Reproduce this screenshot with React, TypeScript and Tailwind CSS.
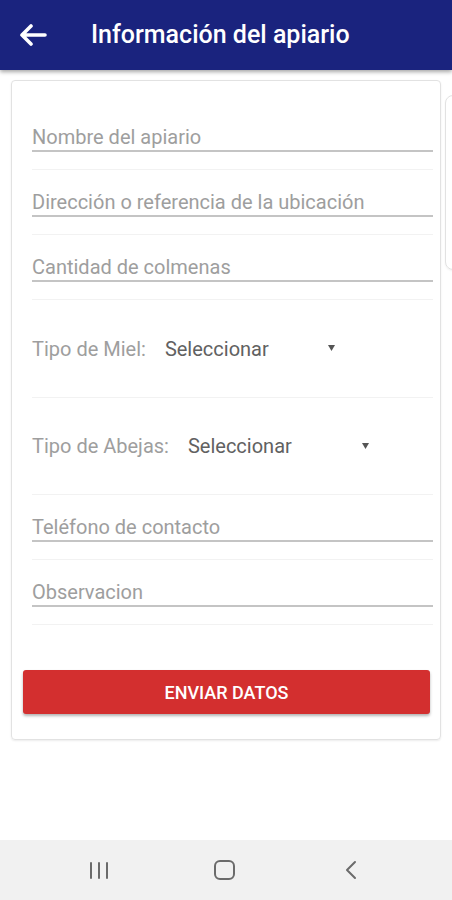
import React from "react";

const textFields = ["Nombre del apiario", "Dirección o referencia de la ubicación", "Cantidad de colmenas"];
const lowerFields = ["Teléfono de contacto", "Observacion"];

function TextRow({ placeholder }: { placeholder: string }) {
  return (
    <div className="h-[65px] border-b border-[#f2f2f2] ml-[20px] mr-[7px] pt-[19px]">
      <div className="h-[28px] border-b-2 border-[#c4c4c4] text-[20px] leading-[26px] text-[#9e9e9e] whitespace-nowrap">
        {placeholder}
      </div>
    </div>
  );
}

function SpinnerRow({ label, width, height }: { label: string; width: string; height: string }) {
  return (
    <div className={`${height} border-b border-[#f2f2f2] ml-[20px] mr-[7px] flex items-center`}>
      <span className="text-[20px] leading-[24px] text-[#9e9e9e]">{label}</span>
      <div className={`${width} ml-[19px] flex items-center justify-between`}>
        <span className="text-[20px] leading-[24px] text-[#616161]">Seleccionar</span>
        <svg width="7" height="6" viewBox="0 0 7 6" className="mb-[1px]">
          <polygon points="0,0 7,0 3.5,6" fill="#555" />
        </svg>
      </div>
    </div>
  );
}

export default function App() {
  return (
    <div className="w-[452px] h-[900px] flex flex-col bg-white overflow-hidden font-['Roboto',sans-serif]">
      {/* HEADER */}
      <header className="h-[70px] shrink-0 bg-[#1a237e] flex items-center shadow-[0_2px_4px_rgba(0,0,0,0.35)] relative z-10">
        <svg width="28" height="22" viewBox="0 0 28 22" className="ml-[19px]">
          <path d="M26 11H3M12 2L3 11l9 9" fill="none" stroke="#fff" strokeWidth="3.6" strokeLinecap="round" strokeLinejoin="round" />
        </svg>
        <h1 className="ml-[44px] text-[25px] font-medium text-white">Información del apiario</h1>
      </header>

      {/* CONTENT */}
      <main className="flex-1 flex pt-[10px] pl-[11px] gap-[4px] overflow-hidden">
        <div className="w-[430px] h-[660px] shrink-0 border border-[#e2e2e2] rounded-[4px] shadow-[0_1px_2px_rgba(0,0,0,0.08)] pt-[24px] flex flex-col">
          {textFields.map((f) => (
            <TextRow key={f} placeholder={f} />
          ))}
          <SpinnerRow label="Tipo de Miel:" width="w-[170px]" height="h-[98px]" />
          <SpinnerRow label="Tipo de Abejas:" width="w-[181px]" height="h-[97px]" />
          {lowerFields.map((f) => (
            <TextRow key={f} placeholder={f} />
          ))}
          <button className="mt-[45px] ml-[11px] mr-[10px] h-[44px] bg-[#d32f2f] rounded-[3px] shadow-[0_2px_3px_rgba(0,0,0,0.3)] text-white text-[18px] font-medium">
            ENVIAR DATOS
          </button>
        </div>
        <div className="w-[60px] h-[175px] mt-[15px] shrink-0 border border-[#e2e2e2] rounded-[8px] shadow-[0_1px_2px_rgba(0,0,0,0.06)]" />
      </main>

      {/* NAV BAR */}
      <nav className="h-[60px] shrink-0 bg-[#f1f1f1] flex items-center">
        <div className="ml-[90px] flex gap-[6px] items-center">
          <div className="w-[2px] h-[17px] bg-[#6b6b6b] rounded" />
          <div className="w-[2px] h-[17px] bg-[#6b6b6b] rounded" />
          <div className="w-[2px] h-[17px] bg-[#6b6b6b] rounded" />
        </div>
        <div className="ml-[106px] w-[21px] h-[20px] border-2 border-[#6b6b6b] rounded-[6px]" />
        <svg width="12" height="20" viewBox="0 0 12 20" className="ml-[110px]">
          <path d="M10 2L2 10l8 8" fill="none" stroke="#6b6b6b" strokeWidth="2" strokeLinecap="round" strokeLinejoin="round" />
        </svg>
      </nav>
    </div>
  );
}
